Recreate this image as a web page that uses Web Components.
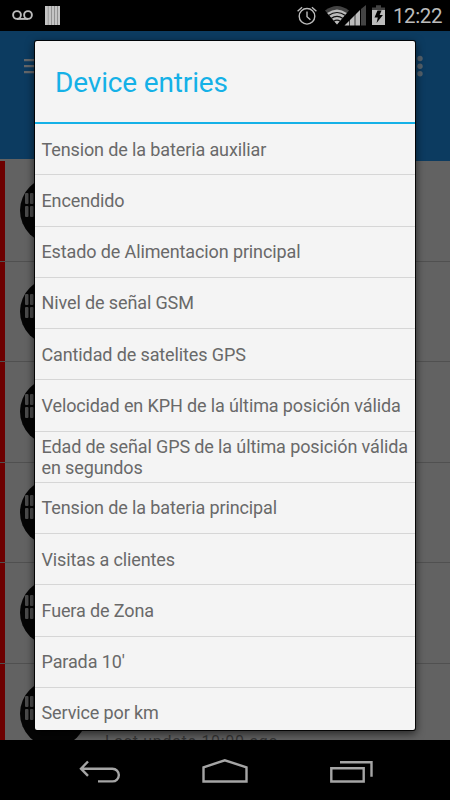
<!DOCTYPE html>
<html lang="es">
<head>
<meta charset="utf-8">
<title>Device entries</title>
<style>
body {
  margin: 0;
  font-family: Roboto, "Noto Sans", sans-serif;
  background: #000;
}
</style>
</head>
<body>
<phone-screen>
  <status-bar slot="status" time="12:22"></status-bar>
  <device-list slot="page"></device-list>
  <entries-dialog slot="dialog" heading="Device entries">
    <entry-row>Tension de la bateria auxiliar</entry-row>
    <entry-row>Encendido</entry-row>
    <entry-row>Estado de Alimentacion principal</entry-row>
    <entry-row>Nivel de señal GSM</entry-row>
    <entry-row>Cantidad de satelites GPS</entry-row>
    <entry-row>Velocidad en KPH de la última posición válida</entry-row>
    <entry-row>Edad de señal GPS de la última posición válida en segundos</entry-row>
    <entry-row>Tension de la bateria principal</entry-row>
    <entry-row>Visitas a clientes</entry-row>
    <entry-row>Fuera de Zona</entry-row>
    <entry-row>Parada 10'</entry-row>
    <entry-row>Service por km</entry-row>
  </entries-dialog>
  <nav-bar slot="nav"></nav-bar>
</phone-screen>

<script>
function define(name, html, setup) {
  const template = document.createElement('template');
  template.innerHTML = html;
  customElements.define(name, class extends HTMLElement {
    connectedCallback() {
      if (this.shadowRoot) return;
      const shadow = this.attachShadow({mode: 'open'});
      shadow.append(template.content.cloneNode(true));
      if (setup) setup(this, shadow);
    }
  });
}

define('phone-screen', `
<style>
:host {
  position: relative;
  display: flex;
  flex-direction: column;
  width: 450px;
  height: 800px;
  overflow: hidden;
}
.page {
  flex: 1;
  min-height: 0;
  overflow: hidden;
}
.overlay {
  position: absolute;
  top: 31px;
  left: 0;
  width: 450px;
  height: 709px;
  padding: 10px 35px;
  box-sizing: border-box;
  overflow: hidden;
}
</style>
<slot name="status"></slot>
<div class="page"><slot name="page"></slot></div>
<slot name="nav"></slot>
<div class="overlay"><slot name="dialog"></slot></div>
`);

define('status-bar', `
<style>
:host {
  display: flex;
  height: 31px;
  background: #000;
  color: #bcbcbc;
}
svg { display: block; flex: none; }
.time {
  font-size: 20.5px;
  line-height: 32px;
  letter-spacing: -.4px;
  margin-left: 3px;
  white-space: nowrap;
}
</style>
<svg width="390" height="31" viewBox="0 0 390 31">
  <g fill="none" stroke="#bcbcbc" stroke-width="1.9">
    <circle cx="17" cy="15" r="3.9"/>
    <circle cx="28" cy="15" r="3.9"/>
    <path d="M17 18.9H28"/>
  </g>
  <path fill="#858585" d="M45 6h15v19H45z"/>
  <path fill="#c4c4c4" d="M45 6h2.800v19H45zM48.500 6h2.700v19h-2.700zM52 6h2.200v19H52zM55 6h2v19h-2zM57.800 6H60v19h-2.200z"/>
  <g fill="none" stroke="#bcbcbc" stroke-width="1.4">
    <circle cx="307" cy="16.300" r="7.800"/>
    <path d="M307 11.500v5.300l3.400 3M297.600 11.200l4.500-3.900M316.400 11.200l-4.500-3.900"/>
  </g>
  <path fill="#434343" d="M337 24.500L325 10.500q12-9 24 0z"/>
  <path fill="#bcbcbc" d="M337 24.500L327.200 12.900q9.800-7 19.600 0z"/>
  <g fill="none" stroke="#111" stroke-width="1.200">
    <path d="M328.500 15.500q8.500-6 17 0M331 18.500q6-4.400 12 0M333.600 21.300q3.400-2.400 6.800 0"/>
  </g>
  <path fill="#bcbcbc" d="M344.500 25.500L360 10v15.500z"/>
  <path fill="#434343" d="M361 9l5-4v20.500h-5z"/>
  <path stroke="#000" stroke-width=".7" d="M349.500 18v8M355 13v13M360.500 8v18"/>
  <path fill="#434343" d="M372 7.500h4V5.200h5v2.300h4V12h-13z"/>
  <path fill="#bcbcbc" d="M372 10h13v15h-13z"/>
  <path fill="#000" d="M377.500 10.500l-3 7h3.300l-1.200 5.500 6.300-8h-3.300l2-4.500z"/>
</svg>
<span class="time"></span>
`, (host, shadow) => {
  shadow.querySelector('.time').textContent = host.getAttribute('time');
});

define('device-list', `
<style>
:host { display: block; background: #626262; }
header {
  display: flex;
  justify-content: space-between;
  height: 130px;
  background: #0c3b60;
}
header svg { display: block; }
</style>
<header>
  <svg width="60" height="130" viewBox="0 0 60 130">
    <path fill="#646669" d="M24 28h16v2.300H24zM24 34h16v2.300H24zM24 40h16v2.300H24z"/>
    <path fill="#626262" d="M0 128h60v2H0z"/>
  </svg>
  <svg width="60" height="70" viewBox="0 0 60 70">
    <g fill="#55616b">
      <circle cx="30" cy="27.500" r="2.700"/>
      <circle cx="30" cy="35.200" r="2.700"/>
      <circle cx="30" cy="42.700" r="2.700"/>
    </g>
  </svg>
</header>
<device-row></device-row>
<device-row></device-row>
<device-row></device-row>
<device-row></device-row>
<device-row></device-row>
<device-row>Last update 10:00 ago</device-row>
`);

define('device-row', `
<style>
:host {
  display: flex;
  height: 100.600px;
  box-sizing: border-box;
  border-bottom: 1px solid #505050;
  color: #373737;
}
.mark {
  flex: none;
  width: 5px;
  background: #6d0000;
}
svg { flex: none; display: block; margin: 16px 0 0 15px; }
.windows { filter: blur(.7px); }
.text {
  margin: 68px 0 0 18px;
  font-size: 16px;
  line-height: 20px;
  letter-spacing: .7px;
  white-space: nowrap;
}
</style>
<div class="mark"></div>
<svg width="67" height="67" viewBox="0 0 67 67">
  <circle cx="33.500" cy="33.500" r="33.500" fill="#050505"/>
  <g class="windows" fill="#4a4a4a">
    <rect x="5" y="16" width="3.500" height="11" rx="1"/>
    <rect x="10" y="16" width="3.500" height="11" rx="1"/>
    <rect x="5" y="29" width="3.500" height="11" rx="1"/>
    <rect x="10" y="29" width="3.500" height="11" rx="1"/>
  </g>
</svg>
<div class="text"><slot></slot></div>
`);

define('entries-dialog', `
<style>
:host {
  display: flex;
  flex-direction: column;
  height: 689px;
  overflow: hidden;
  border-radius: 2px;
  background: #f4f4f4;
  box-shadow: 0 0 0 1px rgba(0, 0, 0, .9), 0 3px 9px 1px rgba(0, 0, 0, .6);
}
h2 {
  flex: none;
  box-sizing: border-box;
  height: 83px;
  margin: 0;
  padding-left: 20px;
  border-bottom: 2px solid #15b1e7;
  color: #15b1e7;
  font-size: 28px;
  font-weight: 400;
  line-height: 84px;
  letter-spacing: -.15px;
}
.list { flex: 1; min-height: 0; overflow: hidden; }
</style>
<h2></h2>
<div class="list"><slot></slot></div>
`, (host, shadow) => {
  shadow.querySelector('h2').textContent = host.getAttribute('heading');
});

define('entry-row', `
<style>
:host {
  display: flex;
  align-items: center;
  box-sizing: border-box;
  height: 51.250px;
  padding: 0 4px 0 6.500px;
  border-bottom: 1px solid #d6d6d6;
  color: #696969;
  font-size: 18px;
  line-height: 21px;
  letter-spacing: -.12px;
}
</style>
<span><slot></slot></span>
`);

define('nav-bar', `
<style>
:host {
  display: flex;
  justify-content: center;
  height: 60px;
  background: #000;
}
svg { display: block; }
</style>
<svg width="450" height="60" viewBox="0 0 450 60" fill="none" stroke="#a5a5a5" stroke-width="2.400">
  <path d="M81 28.700h31.500a6.300 6.300 0 0 1 0 12.700H98M88 21.500l-7 7.200 7 7.200"/>
  <path d="M203.500 41.500V27.300l21.300-7 21.700 7v14.200z"/>
  <path d="M331.300 28.300h32.400v13.200h-32.400zM340 22.300h31.500v14.400"/>
</svg>
`);
</script>
</body>
</html>
